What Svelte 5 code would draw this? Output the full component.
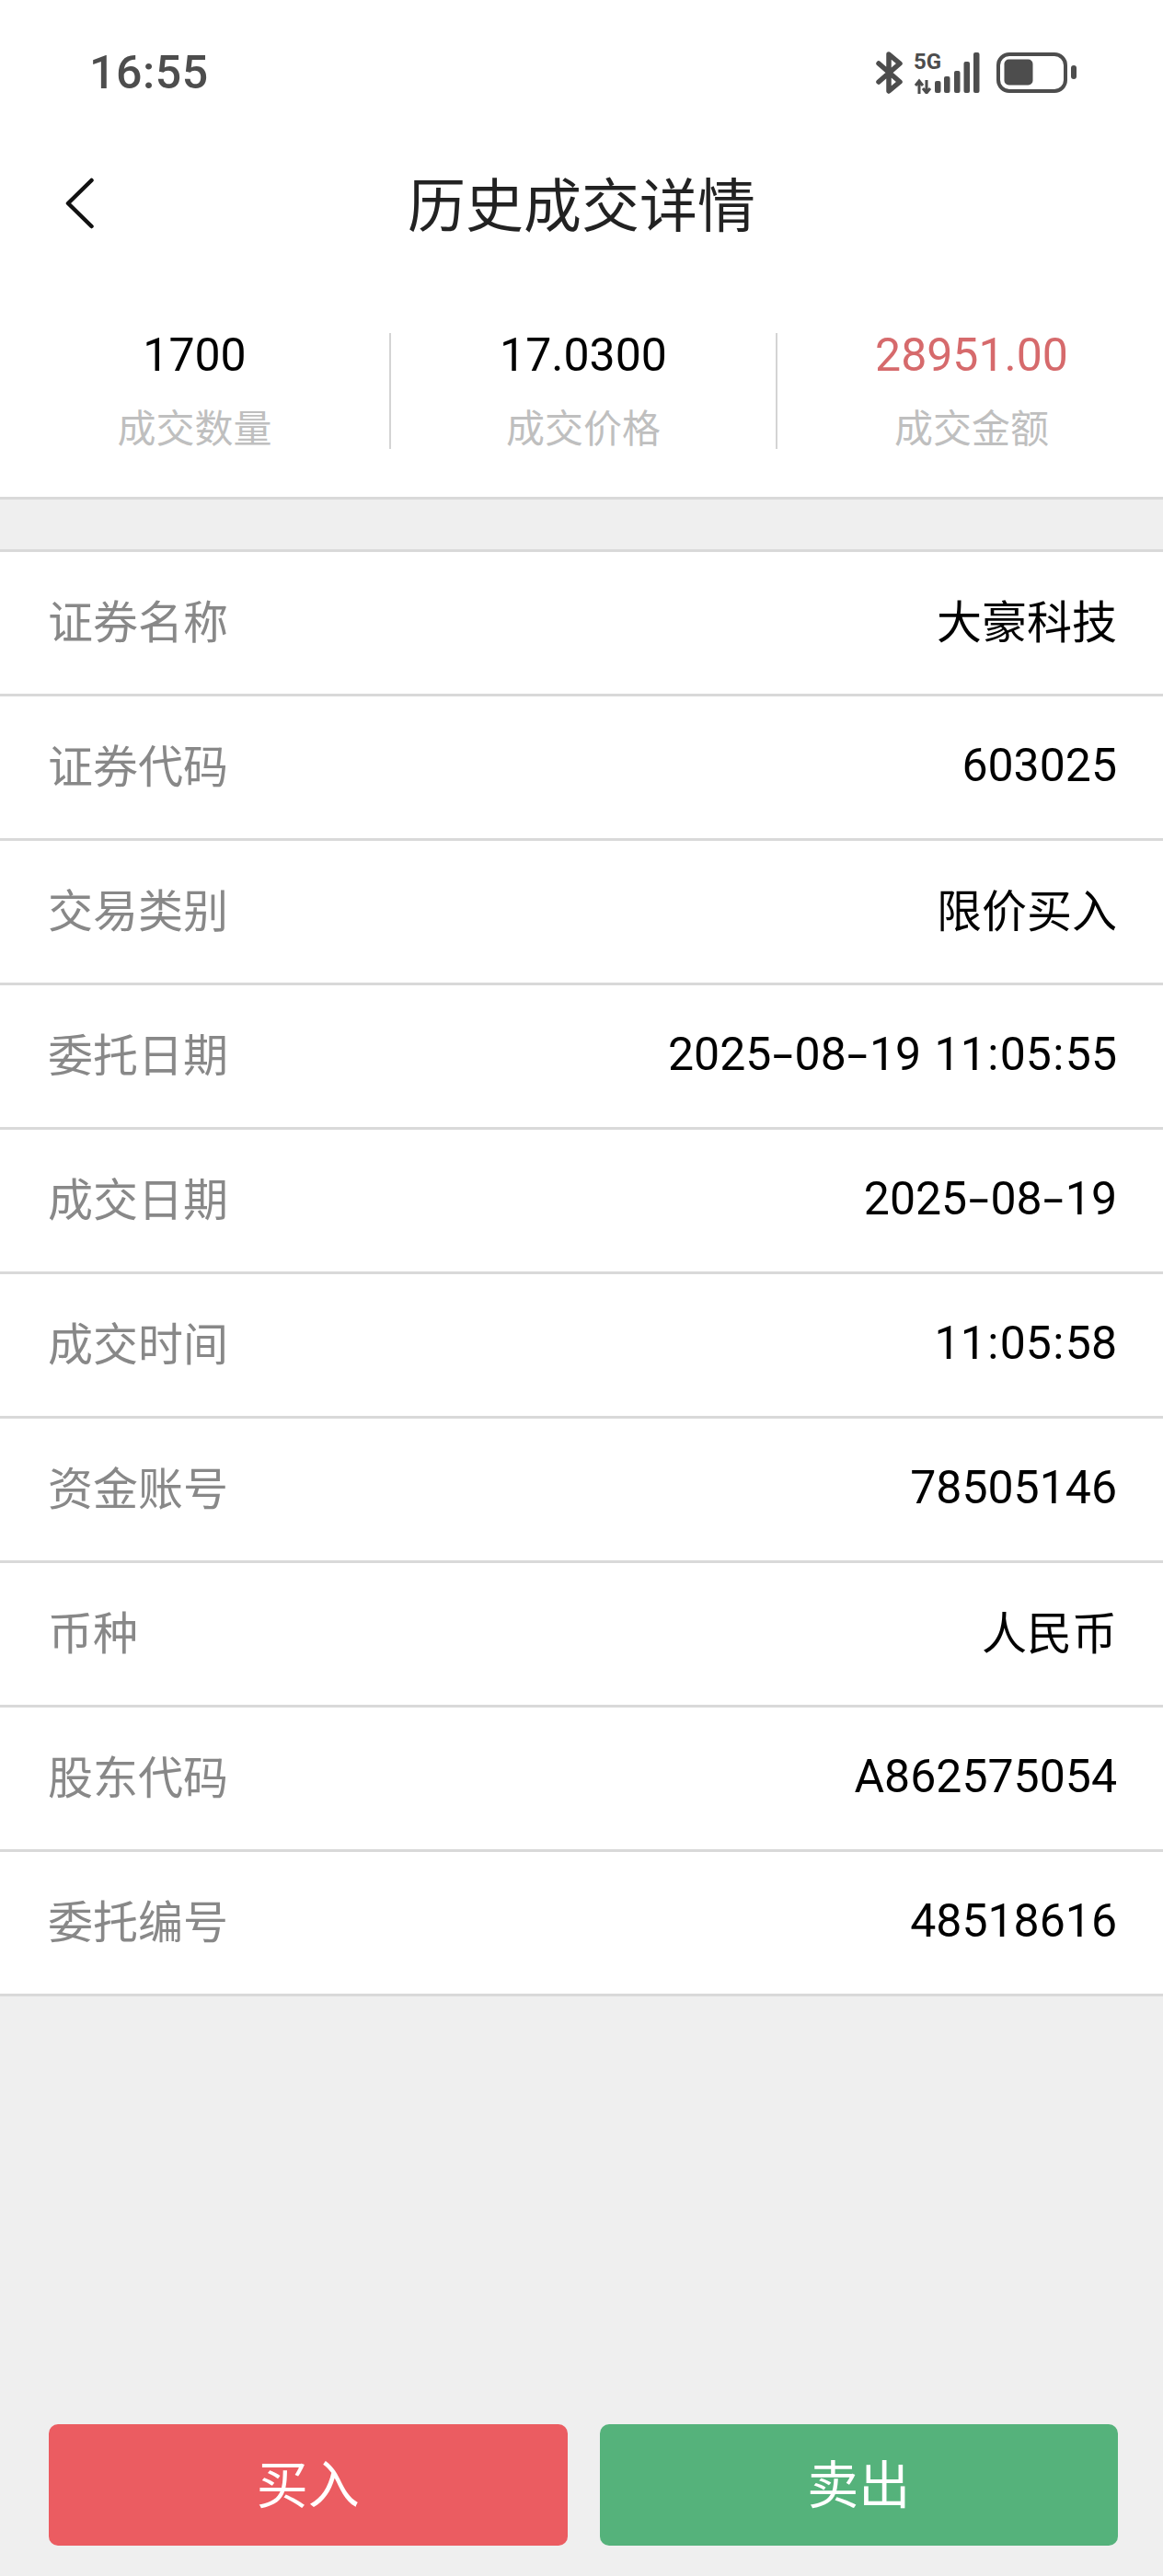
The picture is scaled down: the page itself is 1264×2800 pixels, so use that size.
<script>
    const summary = [
        { value: '1700', label: '成交数量' },
        { value: '17.0300', label: '成交价格' },
        { value: '28951.00', label: '成交金额', red: true }
    ];

    const rows = [
        ['证券名称', '大豪科技'],
        ['证券代码', '603025'],
        ['交易类别', '限价买入'],
        ['委托日期', '2025-08-19 11:05:55'],
        ['成交日期', '2025-08-19'],
        ['成交时间', '11:05:58'],
        ['资金账号', '78505146'],
        ['币种', '人民币'],
        ['股东代码', 'A862575054'],
        ['委托编号', '48518616']
    ];

    // hyphens and colons sit wider than the font's own, so they get their own span
    const splitSeparators = (text) => text.split(/([-:])/);
    const isCjk = (text) => /[\u4e00-\u9fff]/.test(text);
</script>

<div class="page">
    <header class="status">
        <span class="time">16:55</span>
        <svg class="status-icons" width="220" height="50" viewBox="0 -4 220 50">
            <!-- bluetooth -->
            <path d="M5 13 L28 33 L16 43 L16 3 L28 13 L5 33" fill="none" stroke="#4d4d4d" stroke-width="5.5" stroke-linejoin="round" stroke-linecap="round" />
            <!-- network -->
            <text x="43" y="18.500" class="net">5G</text>
            <path d="M49 46 V33 M45 37 L49 32 L53 37" fill="none" stroke="#4d4d4d" stroke-width="3" />
            <path d="M57 31 V44 M53 40 L57 45 L61 40" fill="none" stroke="#4d4d4d" stroke-width="3" />
            <rect x="66" y="32" width="6.5" height="13" rx="2" fill="#4d4d4d" />
            <rect x="76" y="27" width="6.5" height="18" rx="2" fill="#4d4d4d" />
            <rect x="87" y="21" width="6.5" height="24" rx="2" fill="#4d4d4d" />
            <rect x="97.500" y="11" width="6.5" height="34" rx="2" fill="#4d4d4d" />
            <rect x="108" y="1" width="6.5" height="44" rx="2" fill="#4d4d4d" />
            <!-- battery -->
            <rect x="135" y="3" width="73" height="40" rx="12" fill="none" stroke="#4d4d4d" stroke-width="4" />
            <rect x="141.500" y="8.500" width="31" height="28" rx="5" fill="#4d4d4d" />
            <rect x="214" y="15" width="6" height="15" rx="3" fill="#4d4d4d" />
        </svg>
    </header>

    <nav class="nav">
        <svg class="back" width="32" height="56" viewBox="0 0 32 56">
            <path d="M29.500 3 L4 28 L29.500 53" fill="none" stroke="#111" stroke-width="4.500" stroke-linecap="round" stroke-linejoin="round" />
        </svg>
        <h1>历史成交详情</h1>
    </nav>

    <section class="summary">
        {#each summary as item}
            <div class="cell">
                <span class="value" class:red={item.red}>{item.value}</span>
                <span class="label">{item.label}</span>
            </div>
        {/each}
    </section>

    <section class="list">
        {#each rows as [name, val]}
            <div class="row">
                <span class="name">{name}</span>
                <span class="val" class:cjk={isCjk(val)}>
                    {#each splitSeparators(val) as part}
                        {#if part === '-'}<span class="dash">-</span>{:else if part === ':'}<span class="colon">:</span>{:else}{part}{/if}
                    {/each}
                </span>
            </div>
        {/each}
    </section>

    <footer class="actions">
        <button class="buy">买入</button>
        <button class="sell">卖出</button>
    </footer>
</div>

<style>
    :global(body) {
        margin: 0;
    }

    .page {
        height: 2800px;
        display: flex;
        flex-direction: column;
        background: #efefef;
        font-family: Roboto, "Noto Sans CJK SC", sans-serif;
        overflow: hidden;
    }

    .status {
        height: 150px;
        box-sizing: border-box;
        padding: 52px 94px 0 97px;
        display: flex;
        justify-content: space-between;
        align-items: flex-start;
        background: #fff;
    }

    .time {
        margin-top: 4px;
        font-size: 50px;
        line-height: 46px;
        font-weight: 500;
        letter-spacing: 0.6px;
        color: #4d4d4d;
    }

    .net {
        font: 700 24px Roboto, sans-serif;
        fill: #4d4d4d;
    }

    .nav {
        height: 150px;
        position: relative;
        display: flex;
        align-items: center;
        justify-content: center;
        background: #fff;
    }

    .back {
        position: absolute;
        left: 70px;
        top: 43px;
    }

    h1 {
        margin: 0 0 14px;
        font-size: 63px;
        font-weight: 400;
        color: #222;
    }

    .summary {
        height: 243px;
        box-sizing: border-box;
        padding-top: 62px;
        display: grid;
        grid-template-columns: 425px 420px 1fr;
        align-items: start;
        background: #fff;
        border-bottom: 3px solid #d9d9d9;
    }

    .cell {
        height: 126px;
        display: flex;
        flex-direction: column;
        align-items: center;
        gap: 30px;
        border-right: 2px solid #d4d4d4;
    }

    .cell:last-child {
        padding-left: 3px;
        border-right: none;
    }

    .value {
        font-size: 50px;
        line-height: 48px;
        color: #000;
    }

    .value.red {
        color: #d66a6c;
    }

    .label {
        font-size: 42px;
        line-height: 54px;
        color: #bfbfbf;
    }

    .list {
        margin-top: 54px;
        border-top: 3px solid #d9d9d9;
        background: #fff;
    }

    .row {
        height: 154px;
        padding: 0 50px 0 52px;
        display: flex;
        justify-content: space-between;
        align-items: center;
        border-bottom: 3px solid #d9d9d9;
    }

    .name {
        font-size: 49px;
        padding-bottom: 10px;
        color: #888;
    }

    .val {
        font-size: 50px;
        word-spacing: 2px;
        padding-bottom: 5px;
        color: #000;
    }

    .val.cjk {
        font-size: 49px;
        padding-bottom: 10px;
    }

    .dash {
        display: inline-block;
        margin: 0 5.7px;
        transform: scaleX(1.6);
    }

    .colon {
        margin: 0 1.4px;
    }

    .actions {
        margin-top: auto;
        padding: 0 49px 33px 53px;
        display: flex;
        gap: 35px;
    }

    button {
        flex: 1;
        height: 132px;
        padding: 0 0 10px;
        border: none;
        border-radius: 10px;
        font: 400 56px Roboto, "Noto Sans CJK SC", sans-serif;
        color: #fff;
    }

    .buy {
        background: #eb5c61;
    }

    .sell {
        background: #55b27b;
    }
</style>
